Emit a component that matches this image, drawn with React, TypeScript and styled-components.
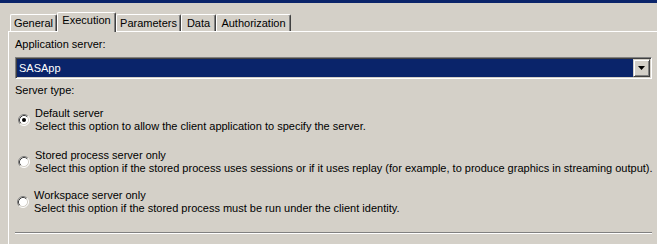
import React from "react";
import styled, { createGlobalStyle } from "styled-components";

const Global = createGlobalStyle`
  html, body { margin: 0; padding: 0; background: #d4d0c8; }
  body {
    font-family: "Liberation Sans", Arial, sans-serif;
    font-size: 11px;
    line-height: 13px;
    color: #000;
    width: 657px;
    height: 244px;
    overflow: hidden;
  }
`;

const Window = styled.div`
  width: 657px;
  height: 244px;
  background: #d4d0c8;
  display: flex;
  flex-direction: column;
`;

const TitleStrip = styled.div`
  height: 3px;
  background: #0a246a;
  flex: none;
`;

const TabStrip = styled.div`
  display: flex;
  align-items: flex-start;
  height: 20px;
  margin-top: 9px;
  padding-left: 10px;
`;

const Tab = styled.div<{ $w: number; $active?: boolean }>`
  box-sizing: border-box;
  width: ${(p) => p.$w}px;
  height: ${(p) => (p.$active ? 20 : 17)}px;
  margin-top: ${(p) => (p.$active ? 0 : 2)}px;
  padding-top: ${(p) => (p.$active ? 1 : 2)}px;
  text-align: center;
  background: #d4d0c8;
  border-top: 1px solid #fff;
  border-left: 1px solid #fff;
  border-right: 1px solid #404040;
  box-shadow: inset -1px 0 0 #808080;
  border-radius: 2px 2px 0 0;
  white-space: nowrap;
  position: relative;
  z-index: ${(p) => (p.$active ? 1 : 0)};
`;

const Panel = styled.div`
  flex: 1;
  margin-top: -1px;
  margin-left: 8px;
  border-top: 1px solid #fff;
  border-left: 1px solid #fff;
  padding: 6px 5px 0 6px;
  display: flex;
  flex-direction: column;
`;

const Label = styled.div<{ $mt?: number }>`
  margin-top: ${(p) => p.$mt ?? 0}px;
  height: 13px;
`;

const Combo = styled.div`
  box-sizing: border-box;
  margin-top: 6px;
  height: 22px;
  display: flex;
  border: 1px solid;
  border-color: #808080 #fff #fff #808080;
  box-shadow: inset 1px 1px 0 #404040, inset -1px -1px 0 #d4d0c8;
  padding: 1px;
  background: #fff;
`;

const ComboField = styled.div`
  flex: 1;
  background: #0a246a;
  color: #fff;
  padding-left: 2px;
  display: flex;
  align-items: center;
`;

const ComboButton = styled.div`
  box-sizing: border-box;
  width: 17px;
  height: 18px;
  background: #d4d0c8;
  border: 1px solid;
  border-color: #d4d0c8 #404040 #404040 #d4d0c8;
  box-shadow: inset 1px 1px 0 #fff, inset -1px -1px 0 #808080;
  display: flex;
  align-items: center;
  justify-content: center;
`;

const Option = styled.div<{ $mt: number; $shift?: number }>`
  display: flex;
  align-items: center;
  margin-top: ${(p) => p.$mt}px;
  padding-left: ${(p) => 3 + (p.$shift ?? 0)}px;
  gap: 5px;
`;

const OptionText = styled.div`
  display: flex;
  flex-direction: column;
  white-space: nowrap;
`;

const Line = styled.div`
  height: 13px;
`;

const Separator = styled.div`
  margin-top: 17px;
  height: 1px;
  background: #808080;
  border-bottom: 1px solid #fff;
`;

const RadioBox = styled.svg`
  flex: none;
  width: 12px;
  height: 12px;
  display: block;
`;

const Radio: React.FC<{ checked?: boolean }> = ({ checked }) => (
  <RadioBox viewBox="0 0 12 12">
    <circle cx="6" cy="6" r="5" fill="#fff" />
    <path d="M2.11 9.89 A5.5 5.5 0 0 1 9.89 2.11" stroke="#808080" fill="none" />
    <path d="M9.89 2.11 A5.5 5.5 0 0 1 2.11 9.89" stroke="#fff" fill="none" />
    <path d="M2.82 9.18 A4.5 4.5 0 0 1 9.18 2.82" stroke="#404040" fill="none" />
    <path d="M9.18 2.82 A4.5 4.5 0 0 1 2.82 9.18" stroke="#d4d0c8" fill="none" />
    {checked && <circle cx="6" cy="6" r="2" fill="#000" />}
  </RadioBox>
);

const Arrow = () => (
  <svg width="7" height="4" viewBox="0 0 7 4">
    <path d="M0 0H7L3.5 4Z" fill="#000" />
  </svg>
);

const tabs: { label: string; w: number; active?: boolean }[] = [
  { label: "General", w: 47 },
  { label: "Execution", w: 59, active: true },
  { label: "Parameters", w: 65 },
  { label: "Data", w: 35 },
  { label: "Authorization", w: 75 },
];

const options = [
  {
    title: "Default server",
    desc: "Select this option to allow the client application to specify the server.",
    checked: true,
    mt: 10,
  },
  {
    title: "Stored process server only",
    desc: "Select this option if the stored process uses sessions or if it uses replay (for example, to produce graphics in streaming output).",
    mt: 16,
  },
  {
    title: "Workspace server only",
    desc: "Select this option if the stored process must be run under the client identity.",
    mt: 14,
    shift: -1,
  },
];

export default function App() {
  return (
    <Window>
      <Global />
      <TitleStrip />
      <TabStrip>
        {tabs.map((t) => (
          <Tab key={t.label} $w={t.w} $active={t.active}>
            {t.label}
          </Tab>
        ))}
      </TabStrip>
      <Panel>
        <Label>Application server:</Label>
        <Combo>
          <ComboField>SASApp</ComboField>
          <ComboButton>
            <Arrow />
          </ComboButton>
        </Combo>
        <Label $mt={5}>Server type:</Label>
        {options.map((o) => (
          <Option key={o.title} $mt={o.mt} $shift={o.shift}>
            <Radio checked={o.checked} />
            <OptionText>
              <Line>{o.title}</Line>
              <Line>{o.desc}</Line>
            </OptionText>
          </Option>
        ))}
        <Separator />
      </Panel>
    </Window>
  );
}
